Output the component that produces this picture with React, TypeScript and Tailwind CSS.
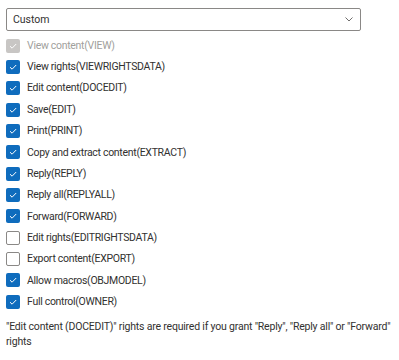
const rights = [
    { label: 'View content(VIEW)', checked: true, disabled: true },
    { label: 'View rights(VIEWRIGHTSDATA)', checked: true },
    { label: 'Edit content(DOCEDIT)', checked: true },
    { label: 'Save(EDIT)', checked: true },
    { label: 'Print(PRINT)', checked: true },
    { label: 'Copy and extract content(EXTRACT)', checked: true },
    { label: 'Reply(REPLY)', checked: true },
    { label: 'Reply all(REPLYALL)', checked: true },
    { label: 'Forward(FORWARD)', checked: true },
    { label: 'Edit rights(EDITRIGHTSDATA)', checked: false },
    { label: 'Export content(EXPORT)', checked: false },
    { label: 'Allow macros(OBJMODEL)', checked: true },
    { label: 'Full control(OWNER)', checked: true },
];

function Check() {
    return (
        <svg width="10" height="10" viewBox="0 0 10 10" fill="none">
            <path d="M2 5.2 L4.1 7.2 L8.2 3" stroke="white" strokeWidth="1" />
        </svg>
    );
}

export default function App() {
    return (
        <div className="w-[399px] h-[360px] bg-white px-[6px] pt-[8px] text-[#323130]" style={{ fontFamily: 'Roboto, "Noto Sans", sans-serif' }}>
            <div className="w-[355px] h-[23px] border border-[#8a8886] rounded-[2px] flex items-center justify-between pl-[6px] pr-[7px]">
                <span className="text-[10.5px]">Custom</span>
                <svg width="8" height="5" viewBox="0 0 8 5" fill="none">
                    <path d="M0.5 0.5 L4 4 L7.5 0.5" stroke="#605e5c" strokeWidth="0.9" />
                </svg>
            </div>
            <div className="mt-[4px] flex flex-col">
                {rights.map((r) => (
                    <div key={r.label} className="h-[21.35px] flex items-center gap-[7px]">
                        <div
                            className={
                                r.disabled
                                    ? 'w-[14px] h-[14px] rounded-[2px] bg-[#c8c6c4] flex items-center justify-center'
                                    : r.checked
                                    ? 'w-[14px] h-[14px] rounded-[2px] bg-[#0f6cbd] flex items-center justify-center'
                                    : 'w-[14px] h-[14px] rounded-[2px] border border-[#8a8886] bg-white'
                            }
                        >
                            {r.checked && <Check />}
                        </div>
                        <span className={r.disabled ? 'text-[10.5px] tracking-[-0.3px] text-[#a19f9d]' : 'text-[10.5px] tracking-[-0.3px] text-[#323130]'}>{r.label}</span>
                    </div>
                ))}
            </div>
            <p className="mt-[7px] text-[10.5px] tracking-[-0.2px] leading-[15px] text-[#323130]">
                "Edit content (DOCEDIT)" rights are required if you grant "Reply", "Reply all" or "Forward" rights
            </p>
        </div>
    );
}
